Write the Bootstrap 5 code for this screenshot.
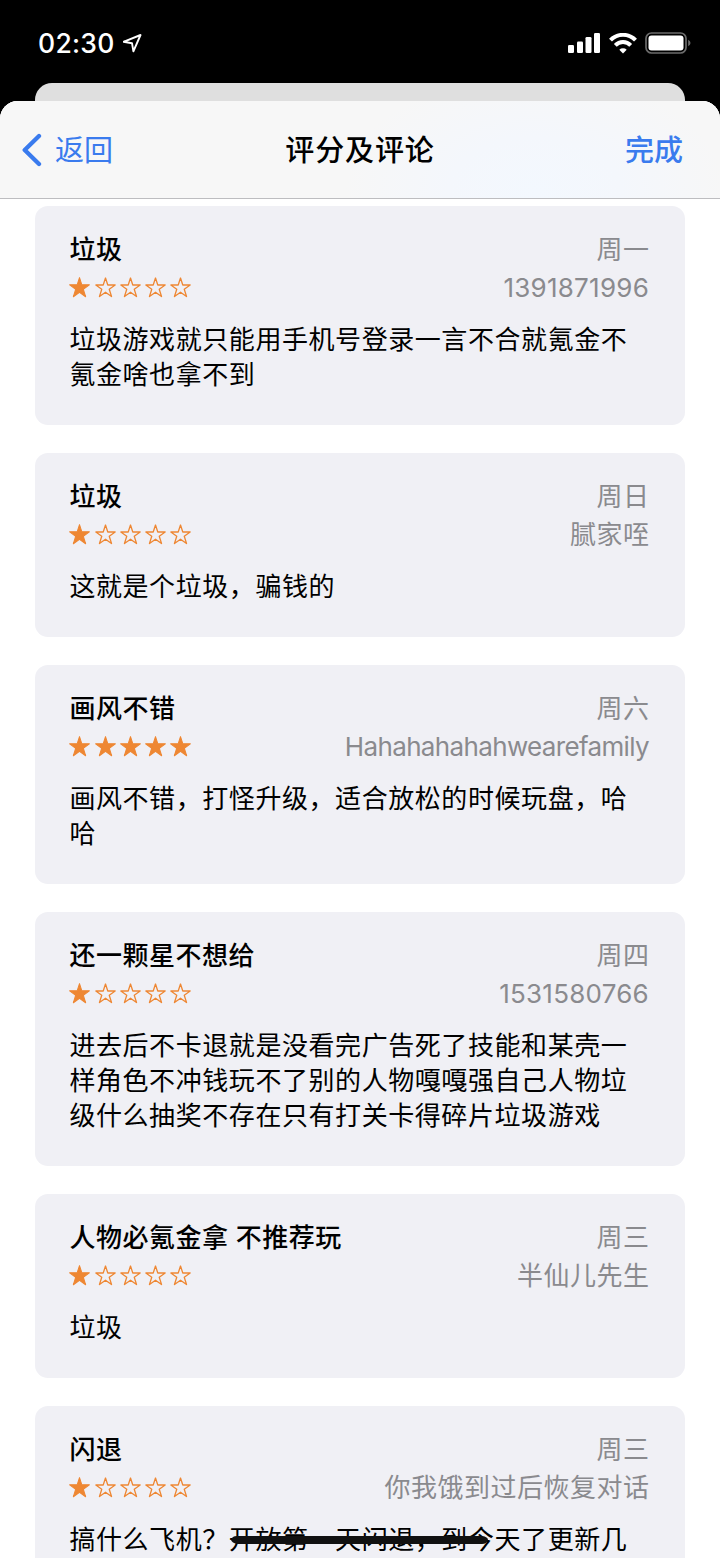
<!DOCTYPE html>
<html lang="zh-CN">
<head>
<meta charset="utf-8">
<meta name="viewport" content="width=device-width, initial-scale=1">
<title>评分及评论</title>
<link href="https://cdn.jsdelivr.net/npm/bootstrap@5.3.0/dist/css/bootstrap.min.css" rel="stylesheet">
<style>
  body { font-family: Inter, "Noto Sans CJK SC", sans-serif; background: #000; color: #000; }
  .screen { width: 720px; height: 1558px; }
  .status { height: 83px; padding: 3px 29px 0 38px; color: #fff; }
  .clock { font-size: 26.5px; font-weight: 550; line-height: 40px; letter-spacing: .3px; }
  .back-sheet { height: 18px; margin: 0 35px; background: #dfdfdf; border-radius: 17px 17px 0 0; }
  .sheet { background: #fff; border-radius: 18px 18px 0 0; }
  .sheet-bar { height: 98px; padding: 0 37px 0 21px; border-bottom: 1px solid #bdbdc0;
    background: radial-gradient(ellipse 190px 120px at 535px 90px, #f3f8fe 0, #f4f7fc 45%, #f7f7f7 100%) #f7f7f7; }
  .bar-btn { font-size: 29px; line-height: 42px; color: #3a7bee; }
  .bar-btn span, .bar-title { padding-top: 2px; }
  .bar-title { font-size: 29px; line-height: 42px; font-weight: 500; letter-spacing: .9px; margin: 0 -8px 0 8px; }
  .strong-cjk { font-weight: 500; }
  .reviews { padding: 7px 35px 0; gap: 28px; }
  .review { background: #f0f0f5; border: 0; border-radius: 13px; padding: 25px 36px 33px 34.4px; }
  .rv-row { height: 38px; font-size: 26px; line-height: 38px; white-space: nowrap; }
  .rv-title { font-weight: 500; letter-spacing: .5px; }
  .rv-meta { color: #8a8a8e; letter-spacing: .5px; margin-right: -.5px; }
  .rv-digits { letter-spacing: .25px; margin-right: 0; }
  .rv-latin { letter-spacing: -.65px; margin-right: 0; }
  .rv-text { margin: 15px 0 0; font-size: 26px; line-height: 35px; letter-spacing: .57px; white-space: nowrap; }
  .stars { gap: 4.2px; height: 36px; color: #ee8733; }
  .stars svg { width: 21px; height: 21px; }
  .scribble { left: 1px; top: 50%; }
</style>
</head>
<body>
<svg class="d-none" xmlns="http://www.w3.org/2000/svg">
  <symbol id="full" viewBox="0.4 0.4 20.2 20.2"><path d="M10.5 1 L12.75 7.9 H20 L14.15 12.2 L16.4 19.4 L10.5 15.1 L4.6 19.4 L6.85 12.2 L1 7.9 H8.25Z" fill="currentColor" stroke="currentColor" stroke-width="1" stroke-linejoin="round"/></symbol>
  <symbol id="empty" viewBox="0.4 0.4 20.2 20.2"><path d="M10.5 1.4 L12.7 8.1 H19.8 L14.1 12.2 L16.3 19.2 L10.5 15 L4.7 19.2 L6.9 12.2 L1.2 8.1 H8.3Z" fill="none" stroke="currentColor" stroke-width="1.25" stroke-linejoin="round"/></symbol>
</svg>

<div class="screen overflow-hidden d-flex flex-column">
  <header class="status d-flex align-items-center justify-content-between flex-shrink-0">
    <div class="d-flex align-items-center">
      <span class="clock">02:30</span>
      <svg class="ms-2" width="20" height="20" viewBox="0 0 20 20" fill="none" stroke="#fff" stroke-width="1.9" stroke-linejoin="round"><path d="M17.500 2 L.5 8.800 L9 10.200 L10.400 18.300Z"/></svg>
    </div>
    <div class="d-flex align-items-center">
      <svg width="33" height="20" viewBox="0 0 33 20" fill="#fff"><rect x="0" y="12" width="6" height="8" rx="1.3"/><rect x="9" y="8.5" width="6" height="11.5" rx="1.3"/><rect x="17.500" y="4" width="6" height="16" rx="1.3"/><rect x="26" y="0" width="6" height="20" rx="1.3"/></svg>
      <svg class="ms-2" width="28" height="21" viewBox="0 0 28 21" fill="none" stroke="#fff" stroke-width="4"><path d="M1.500 7.200 A17.200 17.200 0 0 1 26.500 7.200"/><path d="M6.300 12.300 A10.800 10.800 0 0 1 21.700 12.300"/><path d="M14 20.500 L10.300 16.700 A5.500 5.500 0 0 1 17.700 16.700Z" fill="#fff" stroke="none"/></svg>
      <svg class="ms-2" width="46" height="22" viewBox="0 0 46 22"><rect x="1" y="1" width="40" height="20" rx="5.500" fill="none" stroke="#6b6b6b" stroke-width="1.700"/><rect x="3.500" y="3.500" width="35" height="15" rx="3" fill="#fff"/><path d="M43.200 7.800 Q45.500 9 45.500 11 T43.200 14.200Z" fill="#6b6b6b"/></svg>
    </div>
  </header>

  <div class="back-sheet flex-shrink-0"></div>
  <main class="sheet flex-grow-1 overflow-hidden">
    <nav class="sheet-bar row g-0 align-items-center">
      <div class="col d-flex align-items-center bar-btn">
        <svg width="22" height="34" viewBox="0 0 22 34" fill="none" stroke="currentColor" stroke-width="4.300" stroke-linecap="round" stroke-linejoin="round"><path d="M18 3 L3.700 17 L18 31"/></svg>
        <span class="ms-2 ps-1">返回</span>
      </div>
      <div class="col-auto bar-title strong-cjk">评分及评论</div>
      <div class="col d-flex justify-content-end bar-btn strong-cjk"><span>完成</span></div>
    </nav>

    <section class="reviews d-flex flex-column">
      <article class="card review">
        <div class="rv-row d-flex justify-content-between"><span class="rv-title">垃圾</span><span class="rv-meta">周一</span></div>
        <div class="rv-row d-flex justify-content-between"><span class="stars d-flex align-items-center"><svg><use href="#full"/></svg><svg><use href="#empty"/></svg><svg><use href="#empty"/></svg><svg><use href="#empty"/></svg><svg><use href="#empty"/></svg></span><span class="rv-meta rv-digits">1391871996</span></div>
        <p class="rv-text">垃圾游戏就只能用手机号登录一言不合就氪金不<br>氪金啥也拿不到</p>
      </article>
      <article class="card review">
        <div class="rv-row d-flex justify-content-between"><span class="rv-title">垃圾</span><span class="rv-meta">周日</span></div>
        <div class="rv-row d-flex justify-content-between"><span class="stars d-flex align-items-center"><svg><use href="#full"/></svg><svg><use href="#empty"/></svg><svg><use href="#empty"/></svg><svg><use href="#empty"/></svg><svg><use href="#empty"/></svg></span><span class="rv-meta">腻家咥</span></div>
        <p class="rv-text">这就是个垃圾，骗钱的</p>
      </article>
      <article class="card review">
        <div class="rv-row d-flex justify-content-between"><span class="rv-title">画风不错</span><span class="rv-meta">周六</span></div>
        <div class="rv-row d-flex justify-content-between"><span class="stars d-flex align-items-center"><svg><use href="#full"/></svg><svg><use href="#full"/></svg><svg><use href="#full"/></svg><svg><use href="#full"/></svg><svg><use href="#full"/></svg></span><span class="rv-meta rv-latin">Hahahahahahwearefamily</span></div>
        <p class="rv-text">画风不错，打怪升级，适合放松的时候玩盘，哈<br>哈</p>
      </article>
      <article class="card review">
        <div class="rv-row d-flex justify-content-between"><span class="rv-title">还一颗星不想给</span><span class="rv-meta">周四</span></div>
        <div class="rv-row d-flex justify-content-between"><span class="stars d-flex align-items-center"><svg><use href="#full"/></svg><svg><use href="#empty"/></svg><svg><use href="#empty"/></svg><svg><use href="#empty"/></svg><svg><use href="#empty"/></svg></span><span class="rv-meta rv-digits">1531580766</span></div>
        <p class="rv-text">进去后不卡退就是没看完广告死了技能和某壳一<br>样角色不冲钱玩不了别的人物嘎嘎强自己人物垃<br>级什么抽奖不存在只有打关卡得碎片垃圾游戏</p>
      </article>
      <article class="card review">
        <div class="rv-row d-flex justify-content-between"><span class="rv-title">人物必氪金拿 不推荐玩</span><span class="rv-meta">周三</span></div>
        <div class="rv-row d-flex justify-content-between"><span class="stars d-flex align-items-center"><svg><use href="#full"/></svg><svg><use href="#empty"/></svg><svg><use href="#empty"/></svg><svg><use href="#empty"/></svg><svg><use href="#empty"/></svg></span><span class="rv-meta">半仙儿先生</span></div>
        <p class="rv-text">垃圾</p>
      </article>
      <article class="card review">
        <div class="rv-row d-flex justify-content-between"><span class="rv-title">闪退</span><span class="rv-meta">周三</span></div>
        <div class="rv-row d-flex justify-content-between"><span class="stars d-flex align-items-center"><svg><use href="#full"/></svg><svg><use href="#empty"/></svg><svg><use href="#empty"/></svg><svg><use href="#empty"/></svg><svg><use href="#empty"/></svg></span><span class="rv-meta">你我饿到过后恢复对话</span></div>
        <p class="rv-text">搞什么飞机？<span class="position-relative">开放第一天闪退，到今<svg class="scribble position-absolute translate-middle-y" width="260" height="10" viewBox="0 0 262 10"><path d="M1 5 Q2 1 7 1 H254 Q260 2 260 5 Q259 9 254 9 H7 Q2 8 1 5Z" fill="#111"/></svg></span>天了更新几</p>
      </article>
    </section>
  </main>
</div>
<script src="https://cdn.jsdelivr.net/npm/bootstrap@5.3.0/dist/js/bootstrap.bundle.min.js"></script>
</body>
</html>
